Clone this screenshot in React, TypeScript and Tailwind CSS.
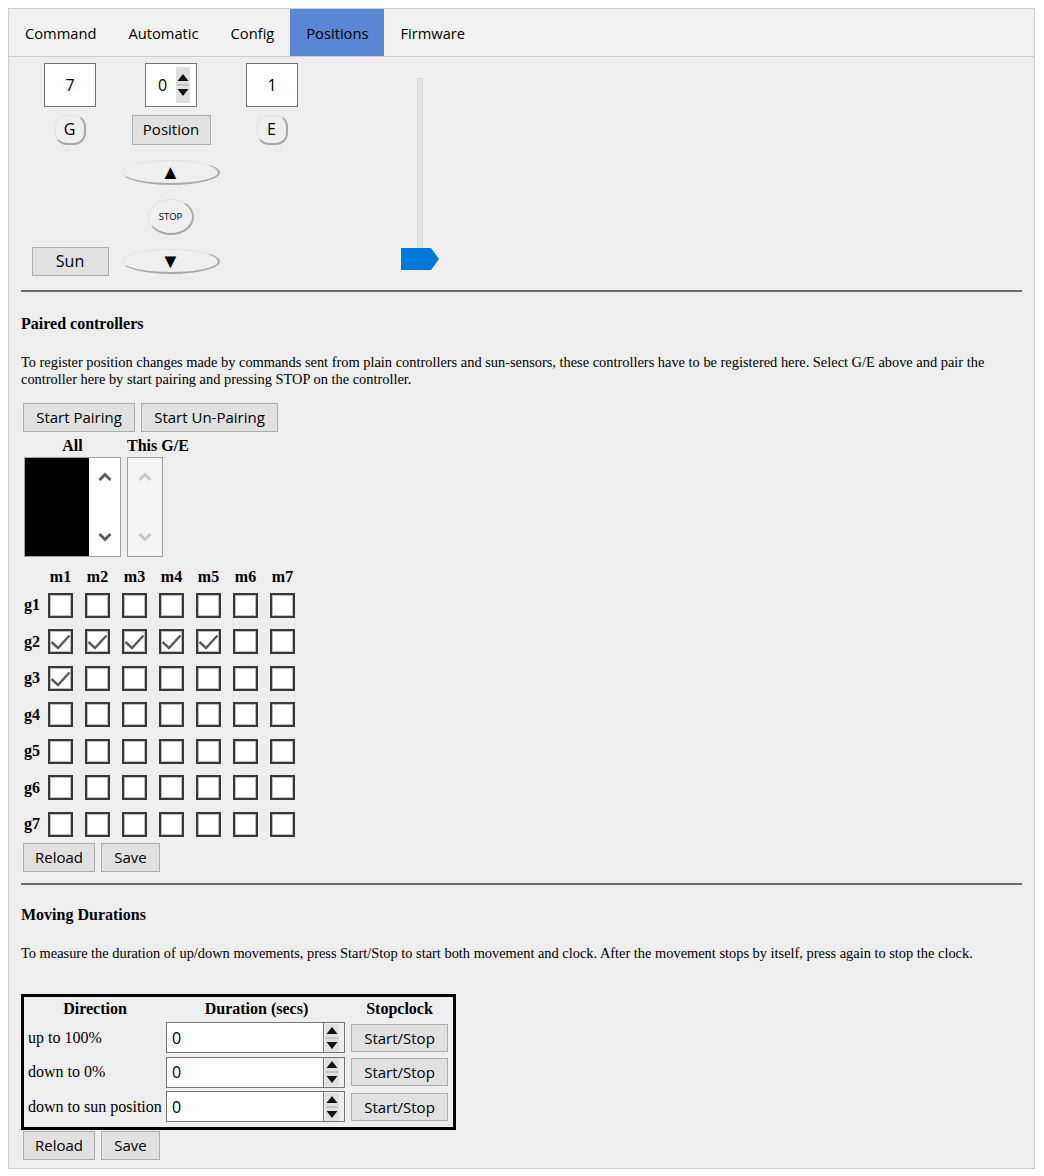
import React from 'react';

const sans = { fontFamily: '"Open Sans", "Noto Sans", sans-serif' };
const serif = { fontFamily: '"Liberation Serif", "Times New Roman", serif' };

const tabs = ['Command', 'Automatic', 'Config', 'Positions', 'Firmware'];

const Spinner = ({ h = 28 }: { h?: number }) => (
  <svg width="14" height={h} viewBox={`0 0 14 ${h}`} className="block">
    <rect x="0" y="0" width="14" height={h} fill="#e0e0e0" />
    <rect x="1" y={h / 2 - 1} width="12" height="2" fill="#c4c4c4" />
    <polygon points={`7,${h / 2 - 11} 12.5,${h / 2 - 4} 1.5,${h / 2 - 4}`} fill="#111111" />
    <polygon points={`7,${h / 2 + 11} 12.5,${h / 2 + 4} 1.5,${h / 2 + 4}`} fill="#111111" />
  </svg>
);

const FlatButton = ({ children, className = '' }: { children: React.ReactNode; className?: string }) => (
  <button
    style={sans}
    className={`flex items-center justify-center border border-[#adadad] bg-[#e1e1e1] text-[15px] font-normal text-black ${className}`}
  >
    {children}
  </button>
);

const RoundButton = ({ children, className = '' }: { children: React.ReactNode; className?: string }) => (
  <button
    style={sans}
    className={`flex items-center justify-center border-t border-l border-b-2 border-r-2 border-t-[#e2e2e2] border-l-[#e2e2e2] border-b-[#a8a8a8] border-r-[#a8a8a8] bg-[#efefef] text-black ${className}`}
  >
    {children}
  </button>
);

const Check = ({ on }: { on: boolean }) => (
  <div className="h-[25px] w-[25px] border-2 border-[#383838] bg-white shadow-[inset_0_0_0_1px_#bdbdbd]">
    {on && (
      <svg width="21" height="21" viewBox="0 0 21 21" className="block">
        <polyline points="1.5,11 8,17 19.5,4.5" fill="none" stroke="#5a5a5a" strokeWidth="2.4" />
      </svg>
    )}
  </div>
);

const Chevron = ({ up, color }: { up: boolean; color: string }) => (
  <svg width="16" height="10" viewBox="0 0 16 10" className="block">
    <polyline
      points={up ? '2.5,8 8,2.5 13.5,8' : '2.5,2 8,7.5 13.5,2'}
      fill="none"
      stroke={color}
      strokeWidth="3"
    />
  </svg>
);

const checked: Record<string, boolean> = {
  '2-1': true,
  '2-2': true,
  '2-3': true,
  '2-4': true,
  '2-5': true,
  '3-1': true,
};

const durations = ['up to 100%', 'down to 0%', 'down to sun position'];

export default function App() {
  return (
    <div className="min-h-[1176px] bg-white pt-[8px] pl-[8px]">
      <div className="w-[1027px] border border-[#cccccc] bg-[#eeeeee]">
        {/* TABS */}
        <div className="flex h-[48px] border-b border-[#cccccc] bg-[#f1f1f1]" style={sans}>
          {tabs.map((t) => (
            <div
              key={t}
              className={`flex h-full items-center px-[16px] pt-[1px] text-[14.7px] text-black ${
                t === 'Positions' ? 'bg-[#5a86d6]' : ''
              }`}
            >
              {t}
            </div>
          ))}
        </div>

        <div className="px-[12px] pb-[8px]">
          {/* POSITION CONTROL */}
          <div className="grid grid-cols-[98px_104px_98px_1fr] grid-rows-[55px_35px_51px_38px_50px]">
            <div className="flex items-center justify-center">
              <div style={sans} className="flex h-[44px] w-[52px] items-center justify-center border border-[#767676] bg-white text-[16px]">
                7
              </div>
            </div>
            <div className="flex items-center justify-center">
              <div style={sans} className="flex h-[44px] w-[52px] items-center border border-[#767676] bg-white pl-[12px] text-[16px]">
                <span className="w-[18px]">0</span>
                <Spinner h={36} />
              </div>
            </div>
            <div className="flex items-center justify-center">
              <div style={sans} className="flex h-[44px] w-[52px] items-center justify-center border border-[#767676] bg-white text-[16px]">
                1
              </div>
            </div>

            <div className="row-span-5 pt-[21px]">
              <div className="relative ml-[80px] h-[192px] w-[38px]">
                <div className="absolute top-0 left-[16px] h-[182px] w-[6px] border border-[#d6d6d6] bg-[#e4e4e4]" />
                <svg width="38" height="22" viewBox="0 0 38 22" className="absolute bottom-0 left-0">
                  <polygon points="0,0 30,0 38,11 30,22 0,22" fill="#0078d7" />
                </svg>
              </div>
            </div>

            <div className="flex items-center justify-center">
              <RoundButton className="h-[30px] w-[31px] rounded-[12px] text-[16px]">G</RoundButton>
            </div>
            <div className="flex items-center justify-center">
              <FlatButton className="h-[30px] w-[79px]">Position</FlatButton>
            </div>
            <div className="flex items-center justify-center">
              <RoundButton className="h-[30px] w-[31px] rounded-[12px] text-[16px]">E</RoundButton>
            </div>

            <div />
            <div className="flex items-center justify-center">
              <RoundButton className="h-[25px] w-[98px] rounded-[50%] text-[20px] leading-none">▲</RoundButton>
            </div>
            <div />

            <div />
            <div className="flex items-center justify-center">
              <RoundButton className="h-[36px] w-[46px] rounded-[50%] text-[9.5px] leading-none">STOP</RoundButton>
            </div>
            <div />

            <div className="flex items-center justify-center">
              <FlatButton className="h-[29px] w-[77px] text-[16px]">Sun</FlatButton>
            </div>
            <div className="flex items-center justify-center">
              <RoundButton className="h-[25px] w-[98px] rounded-[50%] text-[20px] leading-none">▼</RoundButton>
            </div>
            <div />
          </div>

          <div className="mt-[4px] h-[2px] bg-[#6b6b6b]" />

          {/* PAIRED CONTROLLERS */}
          <div style={serif} className="text-black">
            <h4 className="mt-[23px] text-[16px] leading-[18px] font-bold">Paired controllers</h4>
            <p className="mt-[21px] text-[14.4px] leading-[17px]">
              To register position changes made by commands sent from plain controllers and sun-sensors, these
              controllers have to be registered here. Select G/E above and pair the controller here by start pairing and
              pressing STOP on the controller.
            </p>
          </div>

          <div className="mt-[15px] flex gap-[6px] pl-[2px]">
            <FlatButton className="h-[29px] w-[112px]">Start Pairing</FlatButton>
            <FlatButton className="h-[29px] w-[137px]">Start Un-Pairing</FlatButton>
          </div>

          <div style={serif} className="mt-[5px] flex gap-[6px] pl-[3px] text-[16px] leading-[18px] font-bold">
            <div className="flex w-[97px] flex-col items-center">
              <div>All</div>
              <div className="mt-[2px] flex h-[100px] w-[97px] border border-[#a0a0a0] bg-white">
                <div className="h-full w-[64px] bg-black" />
                <div className="flex flex-1 flex-col items-center justify-between py-[14px]">
                  <Chevron up color="#5c5c5c" />
                  <Chevron up={false} color="#5c5c5c" />
                </div>
              </div>
            </div>
            <div className="flex w-[62px] flex-col">
              <div>This G/E</div>
              <div className="mt-[2px] flex h-[100px] w-[36px] flex-col items-center justify-between border border-[#a0a0a0] bg-[#f4f4f4] py-[14px]">
                <Chevron up color="#c8c8c8" />
                <Chevron up={false} color="#c8c8c8" />
              </div>
            </div>
          </div>

          {/* MATRIX */}
          <div style={serif} className="mt-[11px] text-[16px] font-bold">
            <div className="flex h-[18px] items-center pl-[27px]">
              <div className="flex gap-[12px]">
                {[1, 2, 3, 4, 5, 6, 7].map((m) => (
                  <div key={m} className="w-[25px] text-center whitespace-nowrap">
                    m{m}
                  </div>
                ))}
              </div>
            </div>
            <div className="mt-[1px]">
              {[1, 2, 3, 4, 5, 6, 7].map((g) => (
                <div key={g} className="flex h-[36.5px] items-center">
                  <div className="w-[27px] pl-[3px]">g{g}</div>
                  <div className="flex gap-[12px]">
                    {[1, 2, 3, 4, 5, 6, 7].map((m) => (
                      <Check key={m} on={!!checked[`${g}-${m}`]} />
                    ))}
                  </div>
                </div>
              ))}
            </div>
          </div>

          <div className="flex gap-[6px] pl-[2px]">
            <FlatButton className="h-[29px] w-[72px]">Reload</FlatButton>
            <FlatButton className="h-[29px] w-[59px]">Save</FlatButton>
          </div>

          <div className="mt-[11px] h-[2px] bg-[#6b6b6b]" />

          {/* MOVING DURATIONS */}
          <div style={serif} className="text-black">
            <h4 className="mt-[21px] text-[16px] leading-[18px] font-bold">Moving Durations</h4>
            <p className="mt-[21px] text-[14.4px] leading-[17px]">
              To measure the duration of up/down movements, press Start/Stop to start both movement and clock. After the
              movement stops by itself, press again to stop the clock.
            </p>
          </div>

          <div style={serif} className="mt-[32px] w-[435px] border-[3px] border-black pb-[3px] text-[16px]">
            <div className="grid grid-cols-[142px_181px_105px]">
              <div className="flex h-[24px] items-center justify-center font-bold">Direction</div>
              <div className="flex h-[24px] items-center justify-center font-bold">Duration (secs)</div>
              <div className="flex h-[24px] items-center justify-center font-bold">Stopclock</div>
              {durations.map((d) => (
                <React.Fragment key={d}>
                  <div className="flex h-[34.5px] items-center pl-[4px] whitespace-nowrap">{d}</div>
                  <div className="flex h-[34.5px] items-center">
                    <div className="flex h-[31px] w-[179px] items-stretch border border-[#767676] bg-[#eeeeee]">
                      <div style={sans} className="flex flex-1 items-center border-r border-[#767676] bg-white pl-[5px] text-[16px]">
                        0
                      </div>
                      <div className="flex items-center pl-[1px] pr-[5px]">
                        <Spinner h={28} />
                      </div>
                    </div>
                  </div>
                  <div className="flex h-[34.5px] items-center justify-center">
                    <FlatButton className="h-[28px] w-[97px] text-[15.5px]">Start/Stop</FlatButton>
                  </div>
                </React.Fragment>
              ))}
            </div>
          </div>

          <div className="mt-[1px] flex gap-[6px] pl-[2px]">
            <FlatButton className="h-[29px] w-[72px]">Reload</FlatButton>
            <FlatButton className="h-[29px] w-[59px]">Save</FlatButton>
          </div>
        </div>
      </div>
    </div>
  );
}
